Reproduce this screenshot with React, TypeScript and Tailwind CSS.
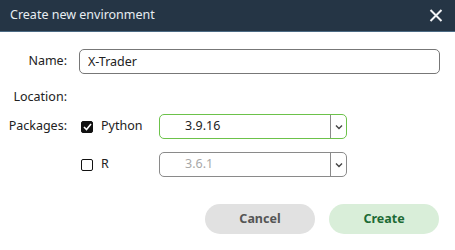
import { useState } from "react";

const font = { fontFamily: '"Noto Sans", "Open Sans", sans-serif' };

function Chevron() {
  return (
    <svg width="8" height="6" viewBox="0 0 8 6" fill="none">
      <path d="M1 1.5 L4 4.5 L7 1.5" stroke="#444" strokeWidth="1.4" />
    </svg>
  );
}

function VersionSelect({ value, active }: { value: string; active: boolean }) {
  return (
    <div
      className={`flex h-[25px] w-[188px] items-stretch rounded-[5px] border ${
        active ? "border-[#6cc24a]" : "border-[#8a8a8a]"
      }`}
    >
      <div
        className={`flex flex-1 items-center pl-[25px] text-[12.5px] ${
          active ? "text-[#222]" : "text-[#a8a8a8]"
        }`}
      >
        {value}
      </div>
      <div className="flex w-[16px] items-center justify-center border-l border-[#8a8a8a]">
        <Chevron />
      </div>
    </div>
  );
}

function Checkbox({ checked, onToggle }: { checked: boolean; onToggle: () => void }) {
  return (
    <button
      type="button"
      onClick={onToggle}
      className={`flex h-[12px] w-[12px] items-center justify-center rounded-[2px] border-[1.5px] border-[#111] ${
        checked ? "bg-[#111]" : "bg-white"
      }`}
    >
      {checked ? (
        <svg width="9" height="8" viewBox="0 0 9 8" fill="none">
          <path d="M1 4 L3.5 6.5 L8 1" stroke="white" strokeWidth="1.6" />
        </svg>
      ) : null}
    </button>
  );
}

export default function App() {
  const [name, setName] = useState("X-Trader");
  const [python, setPython] = useState(true);
  const [r, setR] = useState(false);

  return (
    <div className="h-[250px] w-[455px] bg-white text-[12.5px] text-[#222]" style={font}>
      <div className="flex h-[32px] items-center justify-between border-b border-[#4b6a84] bg-[#253545] pl-[10px] pr-[12px]">
        <span className="text-[12.5px] text-[#e8edf2]">Create new environment</span>
        <svg width="14" height="13" viewBox="0 0 14 13" fill="none">
          <path d="M1.5 1 L12.5 12 M12.5 1 L1.5 12" stroke="#f2f4f6" strokeWidth="2" />
        </svg>
      </div>

      <div className="grid grid-cols-[67px_1fr] items-center gap-x-[12px] pl-0 pr-[15px] pt-[17px]">
        <label htmlFor="env-name" className="text-right">
          Name:
        </label>
        <input
          id="env-name"
          value={name}
          onChange={(e) => setName(e.target.value)}
          className="h-[25px] rounded-[5px] border border-[#777] px-[8px] text-[12.5px] outline-none"
        />

        <span className="mt-[10px] h-[25px] text-right leading-[25px]">Location:</span>
        <span className="mt-[10px] h-[25px]" />

        <span className="mt-[5px] text-right">Packages:</span>
        <div className="mt-[5px] flex items-center pl-[2px]">
          <Checkbox checked={python} onToggle={() => setPython(!python)} />
          <span className="ml-[8px] w-[58px]">Python</span>
          <VersionSelect value="3.9.16" active={python} />
        </div>

        <span className="mt-[13px]" />
        <div className="mt-[13px] flex items-center pl-[2px]">
          <Checkbox checked={r} onToggle={() => setR(!r)} />
          <span className="ml-[8px] w-[58px]">R</span>
          <VersionSelect value="3.6.1" active={r} />
        </div>
      </div>

      <div className="flex justify-end gap-[14px] pr-[16px] pt-[27px]">
        <button
          type="button"
          className="h-[30px] w-[110px] rounded-full bg-[#e1e1e1] text-[12.5px] font-bold text-[#555]"
        >
          Cancel
        </button>
        <button
          type="button"
          className="h-[30px] w-[110px] rounded-full bg-[#d9eed9] text-[12.5px] font-bold text-[#1d6b35]"
        >
          Create
        </button>
      </div>
    </div>
  );
}
